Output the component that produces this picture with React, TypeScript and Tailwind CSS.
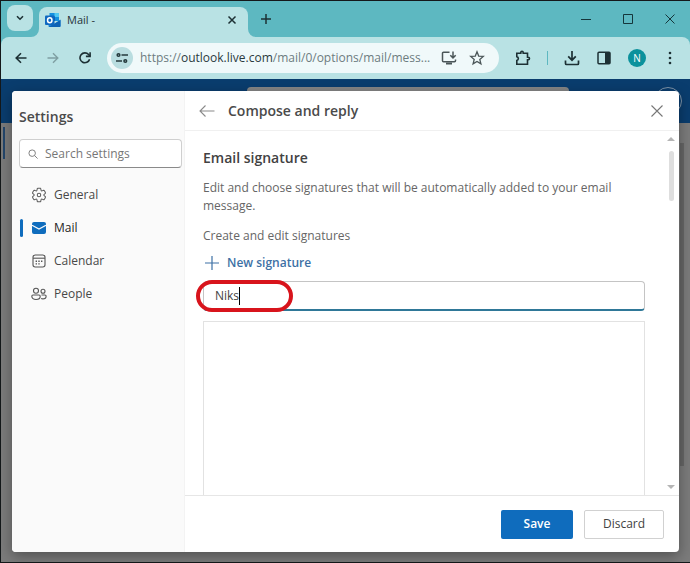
import { useState } from 'react';
import type { ReactNode } from 'react';

const NAV_ITEMS = [
  { id: 'general', label: 'General', icon: GearIcon },
  { id: 'mail', label: 'Mail', icon: MailIcon },
  { id: 'calendar', label: 'Calendar', icon: CalendarIcon },
  { id: 'people', label: 'People', icon: PeopleIcon },
];

function GearIcon() {
  return (
    <svg viewBox="0 0 20 20" className="size-4" fill="none" stroke="#5c5c5c" strokeWidth="1.3">
      <path d="M1.91 7.38A8.5 8.5 0 0 1 3.7 4.3a.5.5 0 0 1 .54-.13l1.92.68a1 1 0 0 0 1.32-.76l.36-2a.5.5 0 0 1 .4-.4 8.53 8.53 0 0 1 3.55 0c.2.04.35.2.38.4l.37 2a1 1 0 0 0 1.32.76l1.92-.68a.5.5 0 0 1 .54.13 8.5 8.5 0 0 1 1.78 3.08c.06.2 0 .4-.15.54l-1.56 1.32a1 1 0 0 0 0 1.52l1.56 1.32a.5.5 0 0 1 .15.54 8.5 8.5 0 0 1-1.78 3.08.5.5 0 0 1-.54.13l-1.92-.68a1 1 0 0 0-1.32.76l-.37 2a.5.5 0 0 1-.38.4 8.53 8.53 0 0 1-3.56 0 .5.5 0 0 1-.39-.4l-.36-2a1 1 0 0 0-1.32-.76l-1.92.68a.5.5 0 0 1-.54-.13 8.5 8.5 0 0 1-1.78-3.08.5.5 0 0 1 .15-.54l1.56-1.32a1 1 0 0 0 0-1.52L2.06 7.92a.5.5 0 0 1-.15-.54Z" />
      <circle cx="10" cy="10" r="2.2" />
    </svg>
  );
}

function MailIcon() {
  return (
    <svg viewBox="0 0 16 16" className="size-4">
      <rect x="1" y="2" width="14" height="12" rx="2" fill="#0f6cbd" />
      <path d="M1 5.2 8 9l7-3.8" fill="none" stroke="#fafafa" strokeWidth="1.2" />
    </svg>
  );
}

function CalendarIcon() {
  return (
    <svg viewBox="0 0 16 16" className="size-4" fill="none" stroke="#555" strokeWidth="1.1">
      <rect x="2" y="2" width="12" height="12" rx="2.2" />
      <path d="M2 5.2h12" />
      <path d="M4.6 8.2H6M7.3 8.2h1.4M10 8.2h1.4M4.6 10.9H6M7.3 10.9h1.4" strokeWidth="1.4" />
    </svg>
  );
}

function PeopleIcon() {
  return (
    <svg viewBox="0 0 16 16" className="size-4" fill="none" stroke="#555" strokeWidth="1.1">
      <circle cx="5" cy="4.8" r="2.5" />
      <circle cx="12" cy="5.3" r="2" />
      <path d="M2 9h6a1.2 1.2 0 0 1 1.2 1.2c0 2-1.7 3.3-4.2 3.3S.8 12.2.8 10.2A1.2 1.2 0 0 1 2 9Z" />
      <path d="M10.5 9h3.4a1.2 1.2 0 0 1 1.2 1.2c0 1.7-1.4 2.7-3.3 2.7-.6 0-1.2-.1-1.7-.3" />
    </svg>
  );
}

function OutlookLogo() {
  return (
    <svg viewBox="0 0 16 16" className="size-4">
      <path d="M4.5 1H14v8H4.5z" fill="#1490df" />
      <path d="M9.5 1H14v4H9.5z" fill="#50c8f2" />
      <path d="M4 4.5h6V9H4z" fill="#0a5fb4" />
      <path d="M3.5 8.5 9.5 12l6-4.5V14a1 1 0 0 1-1 1h-10a1 1 0 0 1-1-1z" fill="#1a86d9" />
      <path d="m15.5 8-12 7h11a1 1 0 0 0 1-1z" fill="#0d62b5" />
      <rect x="0" y="3.5" width="9.5" height="9.5" rx="1" fill="#0f68c0" />
      <ellipse cx="4.75" cy="8.25" rx="2.2" ry="2.5" fill="none" stroke="#fff" strokeWidth="1.5" />
    </svg>
  );
}

function IconButton({ label, className = '', children }: { label: string; className?: string; children: ReactNode }) {
  return (
    <button type="button" aria-label={label} className={`flex shrink-0 items-center justify-center ${className}`}>
      {children}
    </button>
  );
}

function TabStrip() {
  return (
    <div className="flex h-9 items-end bg-[#5db8c1]">
      <IconButton label="Search tabs" className="mb-1.5 ml-1.5 size-[26px] rounded-lg bg-[#b9e2e4]">
        <svg viewBox="0 0 10 10" className="size-2.5" fill="none" stroke="#1d3034" strokeWidth="1.6">
          <path d="m2 3.2 3 3 3-3" />
        </svg>
      </IconButton>
      <svg viewBox="0 0 8 8" className="-ml-0.5 size-2 shrink-0" fill="#b9e2e4">
        <path d="M8 0v8H0a8 8 0 0 0 8-8Z" />
      </svg>
      <div className="flex h-[30px] w-[209px] items-center gap-1.5 rounded-t-lg bg-[#b9e2e4] pr-2 pb-1 pl-1.5">
        <OutlookLogo />
        <span className="flex-1 text-[11px] text-[#263238]">Mail -</span>
        <IconButton label="Close tab" className="size-4">
          <svg viewBox="0 0 10 10" className="size-2.5" fill="none" stroke="#1d3034" strokeWidth="1.5">
            <path d="m1.5 1.5 7 7M8.5 1.5l-7 7" />
          </svg>
        </IconButton>
      </div>
      <svg viewBox="0 0 8 8" className="size-2 shrink-0" fill="#b9e2e4">
        <path d="M0 0v8h8a8 8 0 0 1-8-8Z" />
      </svg>
      <IconButton label="New tab" className="mb-2 size-5">
        <svg viewBox="0 0 10 10" className="size-2.5" fill="none" stroke="#1d3034" strokeWidth="1.5">
          <path d="M5 0v10M0 5h10" />
        </svg>
      </IconButton>
      <div className="mb-2 ml-auto flex gap-[22px] pr-2.5 text-[#15363b]">
        <IconButton label="Minimize" className="size-5">
          <svg viewBox="0 0 10 10" className="size-2.5" stroke="currentColor" fill="none">
            <path d="M0 5.5h10" />
          </svg>
        </IconButton>
        <IconButton label="Maximize" className="size-5">
          <svg viewBox="0 0 10 10" className="size-2.5" stroke="currentColor" fill="none">
            <path d="M.5.5h9v9h-9z" />
          </svg>
        </IconButton>
        <IconButton label="Close window" className="size-5">
          <svg viewBox="0 0 10 10" className="size-2.5" stroke="currentColor" fill="none">
            <path d="m.5.5 9 9M9.5.5l-9 9" />
          </svg>
        </IconButton>
      </div>
    </div>
  );
}

function Toolbar() {
  return (
    <div className="bg-[#5db8c1]">
      <div className="flex h-[42px] items-center rounded-t-lg bg-[#b9e2e4] px-2.5">
        <IconButton label="Back" className="size-5">
          <svg viewBox="0 0 12 12" className="size-3" stroke="#1d3034" fill="none" strokeWidth="1.6">
            <path d="M11.5 6h-10M6 1.2 1.2 6 6 10.8" />
          </svg>
        </IconButton>
        <IconButton label="Forward" className="ml-3 size-5">
          <svg viewBox="0 0 12 12" className="size-3" stroke="#7f9fa2" fill="none" strokeWidth="1.4">
            <path d="M.5 6h10M6 1.2 10.8 6 6 10.8" />
          </svg>
        </IconButton>
        <IconButton label="Reload" className="ml-3 size-5">
          <svg viewBox="0 0 12 12" className="size-3" stroke="#1d3034" fill="none" strokeWidth="1.6">
            <path d="M10.6 7.2A4.900 4.900 0 1 1 9.600 2.600L11 4.200" />
            <path d="M11.100.2v4.200H6.900" />
          </svg>
        </IconButton>
        <div className="ml-3 flex h-[30px] min-w-0 flex-1 items-center rounded-full bg-[#f0f9fa] pr-3.5 pl-1">
          <IconButton label="Site information" className="size-[22px] rounded-full bg-[#b9dde0]">
            <svg viewBox="0 0 12 12" className="size-3" stroke="#24383b" fill="none" strokeWidth="1.6">
              <circle cx="2.5" cy="3" r="1.3" />
              <path d="M5.500 3H12M0 9h6" />
              <circle cx="9.300" cy="9" r="1.300" />
            </svg>
          </IconButton>
          <span className="min-w-0 flex-1 pl-[7px] text-xs whitespace-nowrap text-[#6d7c7f]">
            https://<span className="text-[#2b3b3e]">outlook.live.com</span>/mail/0/options/mail/mess...
          </span>
          <IconButton label="Install app" className="size-4">
            <svg viewBox="0 0 16 16" className="size-4" stroke="#4b5658" fill="none" strokeWidth="1.5">
              <path d="M8.500 2.200h-6a1 1 0 0 0-1 1v7.600a1 1 0 0 0 1 1h11a1 1 0 0 0 1-1V9.500" />
              <path d="M5 13.500h6" strokeWidth="2" />
              <path d="M12 1.500v6M9.300 5.200 12 7.900l2.700-2.700" />
            </svg>
          </IconButton>
          <IconButton label="Bookmark this tab" className="ml-3 size-4">
            <svg viewBox="0 0 16 16" className="size-4" stroke="#4b5658" fill="none" strokeWidth="1.3">
              <path d="m8 1.800 1.700 4.300 4.600.3-3.500 3 1.100 4.500L8 11.400l-3.900 2.500 1.100-4.500-3.500-3 4.600-.3z" />
            </svg>
          </IconButton>
        </div>
        <div className="flex items-center pl-4">
          <IconButton label="Extensions" className="size-4">
            <svg viewBox="0 0 16 16" className="size-4" stroke="#1d3034" fill="none" strokeWidth="1.6">
              <path d="M1.800 3.300h4V2.500a1.200 1.200 0 0 1 2.400 0v.8h4.300v4h.8a1.200 1.200 0 0 1 0 2.400h-.8v4.500H1.800v-3.700a2 2 0 0 0 0-3.900z" />
            </svg>
          </IconButton>
          <span className="mx-4 h-3.5 w-px bg-[#5db8c1]" />
          <IconButton label="Downloads" className="size-4">
            <svg viewBox="0 0 16 16" className="size-4" stroke="#1d3034" fill="none" strokeWidth="1.7">
              <path d="M8 1v9M4.200 6.300 8 10.200l3.800-3.900M1.500 10.500v3a1 1 0 0 0 1 1h11a1 1 0 0 0 1-1v-3" />
            </svg>
          </IconButton>
          <IconButton label="Side panel" className="ml-4 size-4">
            <svg viewBox="0 0 16 16" className="size-4">
              <rect x="2" y="2.300" width="12" height="11.400" rx="1" fill="none" stroke="#1d3034" strokeWidth="1.5" />
              <path d="M9 2h5v12H9z" fill="#1d3034" />
            </svg>
          </IconButton>
          <IconButton label="Profile" className="ml-4 size-[18px] rounded-full bg-[#0b919c] text-[10px] text-white">
            N
          </IconButton>
          <IconButton label="Browser menu" className="ml-3.5 size-5">
            <svg viewBox="0 0 4 14" className="h-3.5 w-1" fill="#1d3034">
              <circle cx="2" cy="2" r="1.3" />
              <circle cx="2" cy="7" r="1.3" />
              <circle cx="2" cy="12" r="1.3" />
            </svg>
          </IconButton>
        </div>
      </div>
    </div>
  );
}

function Sidebar({ active, onSelect }: { active: string; onSelect: (id: string) => void }) {
  return (
    <aside className="flex w-[173px] shrink-0 flex-col border-r border-[#f3f3f3] bg-[#fafafa]">
      <h1 className="mt-4 pl-[7px] text-sm leading-5 font-semibold text-[#4a4a4a]">Settings</h1>
      <label className="mt-3 mr-0.5 ml-[7px] flex h-[29px] items-center gap-[7px] rounded border border-[#cfcfcf] border-b-[#8a8a8a] bg-white pl-2">
        <svg viewBox="0 0 12 12" className="size-2.5 shrink-0" fill="none" stroke="#777" strokeWidth="1.1">
          <circle cx="5" cy="5" r="3.9" />
          <path d="m7.9 7.9 3.6 3.6" />
        </svg>
        <input
          type="search"
          aria-label="Search settings"
          placeholder="Search settings"
          className="w-full min-w-0 text-xs outline-none placeholder:text-[#777]"
        />
      </label>
      <nav className="mt-2.5 flex flex-col pl-2">
        {NAV_ITEMS.map((item) => (
          <button
            key={item.id}
            type="button"
            onClick={() => onSelect(item.id)}
            className={`flex h-[33px] items-center text-xs ${
              item.id === active ? 'font-medium text-[#242424]' : 'text-[#484848]'
            }`}
          >
            <span className={`mr-2 h-[18px] w-[3px] rounded-full ${item.id === active ? 'bg-[#0f6cbd]' : ''}`} />
            <item.icon />
            <span className="ml-[7px]">{item.label}</span>
          </button>
        ))}
      </nav>
    </aside>
  );
}

function SignatureForm() {
  const [name, setName] = useState('Niks');

  return (
    <div className="flex min-h-0 flex-1">
      <div className="flex min-w-0 flex-1 flex-col px-[18px] pt-4 text-xs text-[#666]">
        <h3 className="text-sm leading-[22px] font-semibold text-[#424242]">Email signature</h3>
        <p className="mt-2.5 leading-[18px]">
          Edit and choose signatures that will be automatically added to your email message.
        </p>
        <p className="mt-3 leading-[18px]">Create and edit signatures</p>
        <button type="button" className="mt-2 flex h-5 items-center gap-2 self-start pl-0.5 font-semibold text-[#3d71a5]">
          <svg viewBox="0 0 14 14" className="size-3.5" fill="none" stroke="currentColor" strokeWidth="1.2">
            <path d="M7 0v14M0 7h14" />
          </svg>
          New signature
        </button>
        <div className="relative mt-2 shrink-0">
          <input
            type="text"
            aria-label="Signature name"
            value={name}
            onChange={(e) => setName(e.target.value)}
            className="block h-[30px] w-full rounded border border-[#c4c4c4] border-b-2 border-b-[#2f7898] pl-[11px] text-[#444] outline-none"
          />
          <span className="absolute top-1.5 left-9 h-[18px] w-px bg-black" />
          <span className="absolute -inset-y-px -left-[7px] w-[97px] rounded-full border-4 border-[#d8141c]" />
        </div>
        <textarea
          aria-label="Signature"
          className="mt-2.5 min-h-0 w-full flex-1 resize-none border border-b-0 border-[#e2e2e2] outline-none"
        />
      </div>
      <div className="flex w-4 shrink-0 flex-col items-center py-1.5">
        <svg viewBox="0 0 8 4" className="h-1 w-2" fill="#b5b5b5">
          <path d="M4 0 8 4H0z" />
        </svg>
        <span className="mt-2.5 h-[50px] w-[5px] rounded-sm bg-[#dedede]" />
        <svg viewBox="0 0 8 4" className="mt-auto h-1 w-2" fill="#b5b5b5">
          <path d="M4 4 0 0h8z" />
        </svg>
      </div>
    </div>
  );
}

function SettingsDialog() {
  const [section, setSection] = useState('mail');

  return (
    <div role="dialog" aria-label="Settings" className="flex flex-1 overflow-hidden rounded-sm bg-white shadow-[0_4px_14px_rgba(0,0,0,0.35)]">
      <Sidebar active={section} onSelect={setSection} />
      <section className="flex min-w-0 flex-1 flex-col">
        <header className="flex h-10 shrink-0 items-center border-b border-[#f0f0f0] pr-3 pl-3">
          <IconButton label="Go back" className="size-5">
            <svg viewBox="0 0 16 12" className="h-3 w-4" fill="none" stroke="#8a8a8a" strokeWidth="1.1">
              <path d="M15.500 6H1M6.500.5 1 6l5.500 5.500" />
            </svg>
          </IconButton>
          <h2 className="ml-[11px] flex-1 text-sm font-semibold text-[#4a4a4a]">Compose and reply</h2>
          <IconButton label="Close settings" className="size-5">
            <svg viewBox="0 0 12 12" className="size-3" fill="none" stroke="#777" strokeWidth="1.1">
              <path d="m.5.5 11 11M11.500.5l-11 11" />
            </svg>
          </IconButton>
        </header>
        <SignatureForm />
        <footer className="flex h-[57px] shrink-0 items-center justify-end gap-[11px] border-t border-[#e6e6e6] pr-[15px] text-xs">
          <button type="button" className="h-[29px] w-[72px] rounded-xs bg-[#0f6cbd] font-semibold text-white">
            Save
          </button>
          <button type="button" className="h-[29px] w-20 rounded-xs border border-[#d1d1d1] bg-white text-[#424242]">
            Discard
          </button>
        </footer>
      </section>
    </div>
  );
}

export default function App() {
  return (
    <div className="flex h-screen flex-col border-y border-l border-[#14181a] bg-[#7b7b7b] font-['Open_Sans','Noto_Sans',sans-serif]">
      <TabStrip />
      <Toolbar />
      <main className="relative flex min-h-0 flex-1 flex-col">
        <div className="flex h-11 justify-between bg-[#0a3d6e] pt-2">
          <div className="ml-[246px] h-7 w-[322px] rounded bg-[#858585]" />
          <div className="mr-2 size-7 rounded-full border border-[#7d93a8]" />
        </div>
        <div className="flex flex-1 justify-between pt-1">
          <div className="ml-0.5 h-8 w-0.5 bg-[#23466b]" />
          <div className="mt-4 mr-1.5 mb-24 w-1 bg-[#666]" />
        </div>
        <div className="absolute inset-0 flex px-[11px] pt-3 pb-2.5">
          <SettingsDialog />
        </div>
      </main>
    </div>
  );
}
